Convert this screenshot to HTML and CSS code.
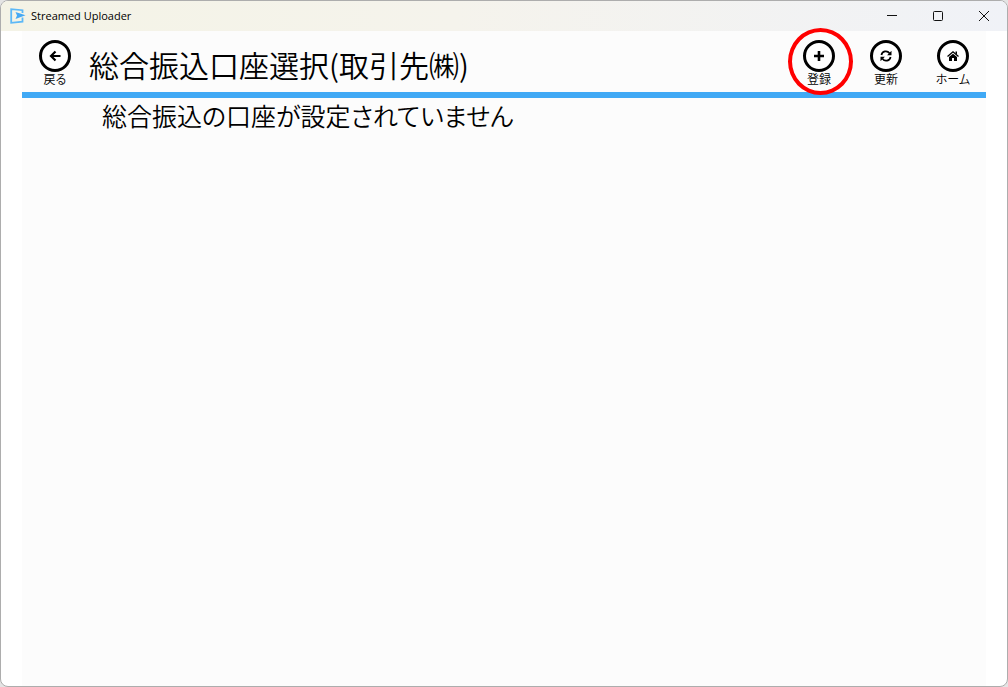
FILE: index.html
```html
<!DOCTYPE html>
<html lang="ja">
<head>
<meta charset="utf-8">
<meta name="viewport" content="width=device-width, initial-scale=1">
<title>Streamed Uploader</title>
<link rel="stylesheet" href="styles.css">
</head>
<body>
<div class="window">
  <header class="titlebar">
    <svg class="logo" viewBox="0 0 16 16" aria-hidden="true">
      <path d="M12.500 5V2.200L1.200 1.200v13.600l11.300-1.200V9.500" fill="none" stroke="#5cb8f7" stroke-width="1.800"/>
      <path d="M5.500 4 15.500 7.300 5.500 11 7 7.500z" fill="#45a9f5"/>
    </svg>
    <span class="app-name">Streamed Uploader</span>
    <div class="controls">
      <button class="control" type="button" aria-label="最小化"><svg viewBox="0 0 12 12"><path d="M1 5.500h10"/></svg></button>
      <button class="control" type="button" aria-label="最大化"><svg viewBox="0 0 12 12"><rect x="1.500" y="1.500" width="9" height="9" rx="1"/></svg></button>
      <button class="control" type="button" aria-label="閉じる"><svg viewBox="0 0 12 12"><path d="m1 1 10 10M11 1 1 11"/></svg></button>
    </div>
  </header>
  <main class="page">
    <div class="toolbar">
      <button class="action" type="button">
        <span class="disc"><svg viewBox="0 0 12 12"><path d="M11.500 6H2.500M6.500 1.500 2 6 6.500 10.500" fill="none" stroke="#000" stroke-width="2.200"/></svg></span>
        <span class="label">戻る</span>
      </button>
      <h1 class="title">総合振込口座選択(取引先㈱)</h1>
      <div class="actions">
        <button class="action marked" type="button">
          <span class="disc"><svg viewBox="0 0 12 12"><path d="M6 1v10M1 6h10" fill="none" stroke="#000" stroke-width="2.600"/></svg></span>
          <span class="label">登録</span>
        </button>
        <button class="action" type="button">
          <span class="disc"><svg viewBox="0 0 12 12"><path d="M1.400 5A4.500 4.500 0 0 1 9.500 3.200M10.600 7A4.500 4.500 0 0 1 2.500 8.800" fill="none" stroke="#000" stroke-width="1.700"/><path d="M11.500.8v4.400H7.100zM.5 11.200V6.800h4.400z"/></svg></span>
          <span class="label">更新</span>
        </button>
        <button class="action" type="button">
          <span class="disc"><svg viewBox="0 0 12 12"><path d="M.5 6.500 6 1.800l5.500 4.700" fill="none" stroke="#000" stroke-width="1.300"/><path d="M8.500 1.500H10v3L8.500 3.200zM6 3.700l4 3.400V11H7V8H5v3H2V7.100z"/></svg></span>
          <span class="label">ホーム</span>
        </button>
      </div>
    </div>
    <p class="message">総合振込の口座が設定されていません</p>
  </main>
</div>
</body>
</html>
```
FILE: styles.css
```css
*,
*::after {
  box-sizing: border-box;
}

body {
  margin: 0;
  background: #e4e4e4;
  color: #000;
  font-family: "Noto Sans CJK JP", sans-serif;
}

.window {
  display: flex;
  flex-direction: column;
  min-height: 100vh;
  border: 1px solid #adadad;
  border-radius: 8px;
  background: #fff;
  overflow: hidden;
}

.titlebar {
  display: flex;
  align-items: center;
  height: 30px;
  padding-left: 9px;
  background: linear-gradient(90deg, #f4f3e6, #f5f3ec 45%, #f0f2f7);
}

.logo {
  width: 16px;
  height: 16px;
}

.app-name {
  margin-left: 5px;
  font: 11px/16px "Open Sans", "Noto Sans", sans-serif;
}

.controls {
  display: flex;
  margin-left: auto;
}

.control {
  display: grid;
  place-items: center;
  width: 46px;
  height: 30px;
  padding: 0;
  border: 0;
  background: none;
}

.control svg {
  width: 12px;
  height: 12px;
  fill: none;
  stroke: #111;
}

.page {
  flex: 1;
  margin: 0 21px;
  background: #fcfcfc;
}

.toolbar {
  display: flex;
  height: 67px;
  padding: 9px 16px 0;
  border-bottom: 6px solid #40a9f5;
}

.action {
  position: relative;
  display: flex;
  flex-direction: column;
  align-items: center;
  width: 34px;
  height: 48px;
  padding: 0;
  border: 0;
  background: none;
  color: inherit;
  font-family: inherit;
}

.disc {
  display: grid;
  flex: none;
  place-items: center;
  width: 32px;
  height: 32px;
  border: 3px solid #000;
  border-radius: 50%;
  background: #fff;
}

.disc svg {
  width: 12px;
  height: 12px;
}

.label {
  font-size: 12px;
  font-weight: 350;
  line-height: 14px;
  white-space: nowrap;
  font-feature-settings: "palt";
}

.title {
  margin: 0 0 0 17px;
  font-size: 30px;
  font-weight: 350;
  line-height: 48px;
  white-space: nowrap;
}

.actions {
  display: flex;
  gap: 33px;
  margin-left: auto;
}

.marked::after {
  content: "";
  position: absolute;
  top: -12px;
  left: -14px;
  z-index: 1;
  width: 65px;
  height: 67px;
  border: 4px solid #f00;
  border-radius: 50%;
}

.message {
  margin: 0;
  padding-left: 80px;
  font-size: 25px;
  font-weight: 350;
  line-height: 34px;
  font-feature-settings: "palt";
}
```
